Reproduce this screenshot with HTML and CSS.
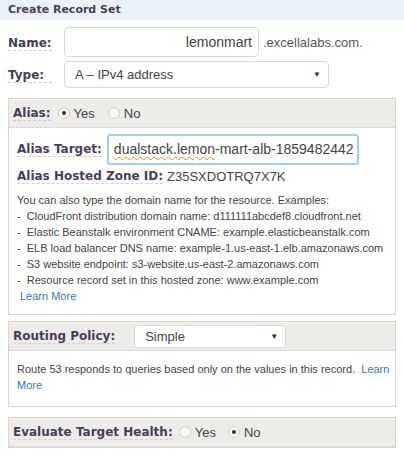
FILE: index.html
```html
<!DOCTYPE html>
<html>
<head>
<meta charset="utf-8">
<link rel="stylesheet" href="styles.css">
</head>
<body>
<div class="title">Create Record Set</div>
<div class="form">
  <div class="row row-name">
    <span class="label lbl-main">Name:</span>
    <div class="input name-input">lemonmart</div>
    <span class="suffix">.excellalabs.com.</span>
  </div>
  <div class="row row-type">
    <span class="label lbl-main">Type:</span>
    <div class="select type-select"><span>A – IPv4 address</span><span class="arrow">▼</span></div>
  </div>

  <div class="panel alias-panel">
    <div class="phead">
      <span class="label">Alias:</span>
      <span class="radio checked"></span><span class="rlabel">Yes</span>
      <span class="radio"></span><span class="rlabel">No</span>
    </div>
    <div class="pbody">
      <div class="row row-target">
        <span class="label">Alias Target:</span>
        <div class="input target-input"><span class="spell">dualstack.lemon</span>-mart-alb-1859482442</div>
      </div>
      <div class="row row-zone">
        <span class="label">Alias Hosted Zone ID:</span>
        <span class="zone">Z35SXDOTRQ7X7K</span>
      </div>
      <div class="help">
        <div>You can also type the domain name for the resource. Examples:</div>
        <div class="li">-&nbsp; CloudFront distribution domain name: d111111abcdef8.cloudfront.net</div>
        <div class="li">-&nbsp; Elastic Beanstalk environment CNAME: example.elasticbeanstalk.com</div>
        <div class="li">-&nbsp; ELB load balancer DNS name: example-1.us-east-1.elb.amazonaws.com</div>
        <div class="li">-&nbsp; S3 website endpoint: s3-website.us-east-2.amazonaws.com</div>
        <div class="li">-&nbsp; Resource record set in this hosted zone: www.example.com</div>
        <div class="lm"><a>Learn More</a></div>
      </div>
    </div>
  </div>

  <div class="panel routing-panel">
    <div class="phead">
      <span class="label">Routing Policy:</span>
      <div class="select routing-select"><span>Simple</span><span class="arrow">▼</span></div>
    </div>
    <div class="pbody routing-body">
      Route 53 responds to queries based only on the values in this record.&nbsp; <a>Learn More</a>
    </div>
  </div>

  <div class="panel eval-panel">
    <div class="phead">
      <span class="label">Evaluate Target Health:</span>
      <span class="radio"></span><span class="rlabel">Yes</span>
      <span class="radio checked"></span><span class="rlabel">No</span>
    </div>
  </div>
</div>
</body>
</html>
```

FILE: styles.css
```css
html, body {
  margin: 0;
  padding: 0;
  background: #ffffff;
  font-family: "Liberation Sans", Arial, sans-serif;
  color: #444444;
}

.title {
  height: 20px;
  line-height: 20px;
  padding-left: 8px;
  background: #eaf1f8;
  font-family: "DejaVu Sans", Verdana, sans-serif;
  font-weight: bold;
  font-size: 11px;
  color: #4b3f58;
}

.form {
  padding: 0 8px;
}

.row {
  display: flex;
  align-items: center;
}

.label {
  font-family: "DejaVu Sans", Verdana, sans-serif;
  font-weight: bold;
  font-size: 12px;
  color: #4a3d59;
  border-bottom: 1px dashed #cfcfcf;
  line-height: 14px;
  white-space: nowrap;
}

.lbl-main {
  width: 44px;
  margin-right: 12px;
  margin-top: 2px;
}

.row-name {
  margin-top: 7px;
  height: 30px;
}

.input {
  box-sizing: border-box;
  background: #fff;
  border: 1px solid #dcd8d0;
  border-radius: 4px;
  font-size: 14px;
  color: #444;
  white-space: nowrap;
  overflow: hidden;
}

.name-input {
  width: 195px;
  height: 30px;
  line-height: 28px;
  text-align: right;
  padding-right: 6px;
}

.suffix {
  margin-left: 4px;
  font-size: 13px;
  color: #555;
}

.row-type {
  margin-top: 4px;
  height: 27px;
}

.select {
  box-sizing: border-box;
  display: flex;
  align-items: center;
  justify-content: space-between;
  background: #fff;
  border: 1px solid #dcd8d0;
  border-radius: 4px;
  font-size: 13px;
  color: #444;
}

.type-select {
  width: 265px;
  height: 27px;
  padding: 0 7px 0 10px;
}

.arrow {
  font-size: 8px;
  color: #333;
}

.panel {
  border: 1px solid #d9d4ca;
}

.phead {
  display: flex;
  align-items: center;
  padding: 0 4px;
  background: #edece8;
  border-bottom: 1px dotted #b9d0e6;
  box-shadow: inset 0 1px 0 #f6f6f3;
}

.alias-panel {
  margin-top: 10px;
}

.alias-panel .phead {
  height: 28px;
}

.radio {
  box-sizing: border-box;
  width: 12px;
  height: 12px;
  border-radius: 50%;
  border: 1px solid #d3d0c8;
  background: #f7f7f5;
  margin-left: 7px;
  margin-right: 4px;
  position: relative;
}

.radio.checked::after {
  content: "";
  position: absolute;
  left: 3px;
  top: 3px;
  width: 4px;
  height: 4px;
  border-radius: 50%;
  background: #333;
}

.rlabel {
  font-size: 13px;
  color: #444;
  margin-right: 6px;
}

.pbody {
  padding: 0 8px;
}

.row-target {
  margin-top: 6px;
  height: 31px;
}

.row-target .label {
  margin-right: 5px;
}

.target-input {
  width: 252px;
  height: 31px;
  line-height: 27px;
  border: 2px solid #a5cdf0;
  border-radius: 3px;
  padding-left: 5px;
}

.spell {
  text-decoration: underline wavy #e0902e;
  text-decoration-thickness: 1px;
  text-underline-offset: 2px;
}

.row-zone {
  margin-top: 2px;
  height: 18px;
}

.zone {
  margin-left: 4px;
  font-size: 13px;
  color: #444;
}

.help {
  margin-top: 7px;
  font-size: 11px;
  line-height: 16px;
  color: #444;
  padding-bottom: 10px;
}

.lm {
  padding-left: 3px;
}

a {
  color: #3b73b8;
  cursor: pointer;
}

.routing-panel {
  margin-top: 6px;
}

.routing-panel .phead {
  height: 28px;
}

.routing-select {
  width: 152px;
  height: 23px;
  margin-left: 19px;
  padding: 0 7px 0 10px;
}

.routing-body {
  font-size: 11px;
  line-height: 16px;
  color: #444;
  padding-top: 10px;
  padding-bottom: 13px;
  padding-right: 2px;
}

.eval-panel {
  margin-top: 10px;
}

.eval-panel .phead {
  height: 28px;
  border-bottom: 1px dotted #b9d0e6;
}

.eval-panel .radio {
  margin-left: 6px;
}
```
